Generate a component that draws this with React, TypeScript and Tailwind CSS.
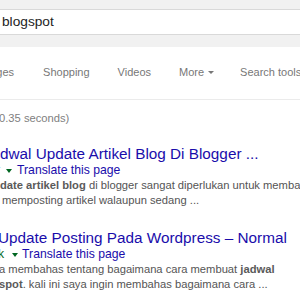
export default function App() {
  const font = "font-['Liberation_Sans',Arial,sans-serif]";

  return (
    <div className={`w-[300px] h-[300px] overflow-hidden bg-white ${font}`}>
      {/* Search header */}
      <div className="h-[47px] bg-[#f1f1f1] pt-[9px]">
        <div className="h-[26px] bg-white border-y border-[#d9d9d9] pl-[2px] text-[13.7px] leading-[24px] text-[#222]">
          blogspot
        </div>
      </div>

      {/* Tabs */}
      <div className="h-[53px] pt-[17px] border-b border-[#ebebeb] flex items-start gap-[28px] text-[11px] leading-[16px] text-[#777] whitespace-nowrap">
        <span className="ml-[-22px]">Images</span>
        <span className="ml-[1px]">Shopping</span>
        <span>Videos</span>
        <span className="h-[16px] flex items-center">
          More
          <span className="ml-[4px] mt-[1px] w-0 h-0 border-t-[3px] border-t-[#777] border-x-[3px] border-x-transparent" />
        </span>
        <span className="ml-[-2px]">Search tools</span>
      </div>

      {/* Stats */}
      <div className="mt-[10px] ml-[-1px] text-[11.2px] leading-[16px] text-[#808080] whitespace-nowrap">
        0.35 seconds)
      </div>

      {/* Result 1 */}
      <div className="mt-[18px] whitespace-nowrap">
        <div className="text-[15.3px] leading-[19px] text-[#1a0dab]">
          dwal Update Artikel Blog Di Blogger ...
        </div>
        <div className="flex items-center text-[12.2px] leading-[15px]">
          <span className="ml-[-4px] text-[#006621]">r</span>
          <span className="ml-[6px] w-0 h-0 border-t-[4px] border-t-[#006621] border-x-[3px] border-x-transparent" />
          <span className="ml-[5px] text-[#1a0dab]">Translate this page</span>
        </div>
        <div className="text-[11.2px] leading-[15px] text-[#545454]">
          <div>
            <b className="text-[#5a5a5a]">date artikel blog</b> di blogger sangat diperlukan untuk membantu
          </div>
          <div className="ml-[2px]">memposting artikel walaupun sedang ...</div>
        </div>
      </div>

      {/* Result 2 */}
      <div className="mt-[20px] whitespace-nowrap">
        <div className="ml-[-2px] text-[15.3px] leading-[19px] text-[#1a0dab]">
          Update Posting Pada Wordpress – Normal
        </div>
        <div className="flex items-center text-[12.2px] leading-[15px]">
          <span className="ml-[-2px] text-[#006621]">k</span>
          <span className="ml-[8px] w-0 h-0 border-t-[4px] border-t-[#006621] border-x-[3px] border-x-transparent" />
          <span className="ml-[4px] text-[#1a0dab]">Translate this page</span>
        </div>
        <div className="text-[11.2px] leading-[15px] text-[#545454]">
          <div className="ml-[-1px]">
            a membahas tentang bagaimana cara membuat <b className="text-[#5a5a5a]">jadwal</b>
          </div>
          <div className="ml-[-1px]">
            <b className="text-[#5a5a5a]">spot</b>. kali ini saya ingin membahas bagaimana cara ...
          </div>
        </div>
      </div>
    </div>
  );
}
